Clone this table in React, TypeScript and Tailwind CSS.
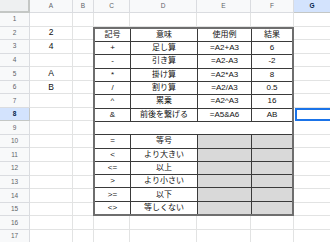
import React from "react";
import clsx from "clsx";

const font = "font-['Liberation_Sans','Noto_Sans_CJK_JP',sans-serif]";
const rowH = "h-[13.56px]";
const line = "border-[#e2e3e3]";

const colA: { [row: number]: string } = { 2: "2", 3: "4", 5: "A", 6: "B" };

const tableRows: {
  sym: string;
  name: string;
  ex?: string;
  res?: string;
  head?: boolean;
  merged?: boolean;
  gray?: boolean;
}[] = [
  { sym: "記号", name: "意味", ex: "使用例", res: "結果", head: true },
  { sym: "+", name: "足し算", ex: "=A2+A3", res: "6" },
  { sym: "-", name: "引き算", ex: "=A2-A3", res: "-2" },
  { sym: "*", name: "掛け算", ex: "=A2*A3", res: "8" },
  { sym: "/", name: "割り算", ex: "=A2/A3", res: "0.5" },
  { sym: "^", name: "累乗", ex: "=A2^A3", res: "16" },
  { sym: "&", name: "前後を繋げる", ex: "=A5&A6", res: "AB" },
  { sym: "", name: "", merged: true },
  { sym: "=", name: "等号", gray: true },
  { sym: "<", name: "より大きい", gray: true },
  { sym: "<=", name: "以上", gray: true },
  { sym: ">", name: "より小さい", gray: true },
  { sym: ">=", name: "以下", gray: true },
  { sym: "<>", name: "等しくない", gray: true },
];

const RowHead: React.FC<{ n: number }> = ({ n }) => (
  <div
    className={clsx(
      "w-[30px] shrink-0 flex items-center justify-center border-r border-b text-[6.5px]",
      rowH,
      n === 8
        ? "bg-[#d3e3fd] text-[#041e49] font-bold border-[#c4c7c5]"
        : "bg-[#f8f9fa] text-[#5f6368] border-[#dadce0]"
    )}
  >
    {n}
  </div>
);

const Cell: React.FC<{ w: string; children?: React.ReactNode }> = ({
  w,
  children,
}) => (
  <div
    className={clsx(
      "shrink-0 flex items-center justify-center border-r border-b text-[8.5px] text-[#111]",
      line,
      w
    )}
  >
    {children}
  </div>
);

const FullRow: React.FC<{ n: number }> = ({ n }) => (
  <div className={clsx("flex", rowH)}>
    <RowHead n={n} />
    <Cell w="w-[43px]">{colA[n]}</Cell>
    <Cell w="w-[21px]" />
    <Cell w="w-[36px]" />
    <Cell w="w-[67px]" />
    <Cell w="w-[54px]" />
    <Cell w="w-[43px]" />
    <div className={clsx("flex-1 border-b", line)} />
  </div>
);

const App: React.FC = () => {
  const bandRows = Array.from({ length: 14 }, (_, i) => i + 2);

  return (
    <div className={clsx("w-[330px] h-[242px] overflow-hidden bg-white", font)}>
      {/* column headers */}
      <div className="flex h-[13px] text-[6.5px] text-[#5f6368]">
        <div className="w-[30px] shrink-0 bg-[#eef0f1] border-r-2 border-b-2 border-[#c4c7c5]" />
        {[
          ["A", "w-[43px]"],
          ["B", "w-[21px]"],
          ["C", "w-[36px]"],
          ["D", "w-[67px]"],
          ["E", "w-[54px]"],
          ["F", "w-[43px]"],
        ].map(([label, w]) => (
          <div
            key={label}
            className={clsx(
              "shrink-0 flex items-center justify-center bg-[#f8f9fa] border-r border-b border-[#dadce0]",
              w
            )}
          >
            {label}
          </div>
        ))}
        <div className="flex-1 flex items-center justify-center bg-[#d3e3fd] text-[#041e49] font-bold border-b border-[#c4c7c5]">
          G
        </div>
      </div>

      <FullRow n={1} />

      {/* rows 2-15 with the table */}
      <div className="flex">
        <div className="flex flex-col">
          {bandRows.map((n) => (
            <div key={n} className={clsx("flex", rowH)}>
              <RowHead n={n} />
              <Cell w="w-[43px]">{colA[n]}</Cell>
              <Cell w="w-[21px]" />
            </div>
          ))}
        </div>

        <div className="w-[201px] -ml-px shrink-0 flex flex-col border-2 border-[#6e6e6e] text-[8px] text-[#111]">
          {tableRows.map((r, i) => (
            <div
              key={i}
              className={clsx(
                "flex-1 flex",
                i < tableRows.length - 1 && "border-b border-[#3a3a3a]"
              )}
            >
              {r.merged ? (
                <div className="flex-1" />
              ) : (
                <>
                  <div className="w-[36px] flex items-center justify-center border-r border-[#3a3a3a]">
                    {r.sym}
                  </div>
                  <div className="w-[67px] flex items-center justify-center border-r border-[#3a3a3a]">
                    {r.name}
                  </div>
                  <div
                    className={clsx(
                      "w-[54px] flex items-center justify-center border-r border-[#3a3a3a]",
                      r.gray && "bg-[#d9d9d9]"
                    )}
                  >
                    {r.ex}
                  </div>
                  <div
                    className={clsx(
                      "flex-1 flex items-center justify-center",
                      r.gray && "bg-[#d9d9d9]"
                    )}
                  >
                    {r.res}
                  </div>
                </>
              )}
            </div>
          ))}
        </div>

        <div className="flex-1 flex flex-col">
          {bandRows.map((n) => (
            <div
              key={n}
              className={clsx(
                rowH,
                n === 8
                  ? "border-2 border-r-0 border-[#1a73e8] ml-px"
                  : clsx("border-b", line)
              )}
            />
          ))}
        </div>
      </div>

      <FullRow n={16} />
      <FullRow n={17} />
    </div>
  );
};

export default App;
